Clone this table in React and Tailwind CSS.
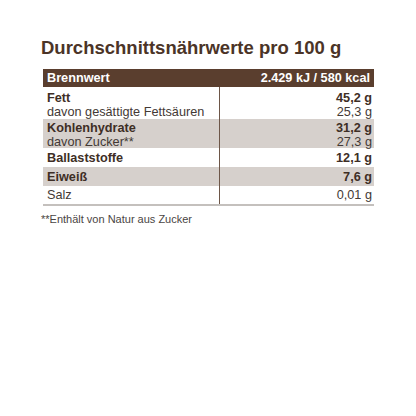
export default function App() {
  const font = { fontFamily: '"Liberation Sans", Arial, sans-serif' };

  return (
    <div className="w-[416px] h-[416px] bg-white" style={font}>
      <div className="pl-[40px] pr-[42px] pt-[37px]">
        <h1 className="text-[18.5px] leading-[22px] font-bold text-[#4b3427] pl-[1px]">
          Durchschnittsnährwerte pro 100 g
        </h1>

        <div className="mt-[10px] ml-[3px] text-[12.7px] leading-[14px] text-[#433935]">
          {/* Brennwert header */}
          <div className="flex justify-between items-center h-[18px] bg-[#5a3e2e] text-white font-bold px-[4px]">
            <span>Brennwert</span>
            <span>2.429 kJ / 580 kcal</span>
          </div>

          <div className="border-b-2 border-[#c4c0bd]">
            {/* Fett */}
            <div className="grid grid-cols-[177px_1fr] h-[32px]">
              <div className="pl-[4px] pt-[4px] border-r border-[#6d5648]">
                <div className="font-bold text-[#3e2e25]">Fett</div>
                <div>davon gesättigte Fettsäuren</div>
              </div>
              <div className="pr-[2px] pt-[4px] text-right">
                <div className="font-bold text-[#3e2e25]">45,2 g</div>
                <div>25,3 g</div>
              </div>
            </div>

            {/* Kohlenhydrate */}
            <div className="grid grid-cols-[177px_1fr] h-[29px] bg-[#d6d0cc]">
              <div className="pl-[4px] pt-[2px] border-r border-[#6d5648]">
                <div className="font-bold text-[#3e2e25]">Kohlenhydrate</div>
                <div>davon Zucker**</div>
              </div>
              <div className="pr-[2px] pt-[2px] text-right">
                <div className="font-bold text-[#3e2e25]">31,2 g</div>
                <div>27,3 g</div>
              </div>
            </div>

            {/* Ballaststoffe */}
            <div className="grid grid-cols-[177px_1fr] h-[19px]">
              <div className="pl-[4px] flex items-center border-r border-[#6d5648] font-bold text-[#3e2e25]">
                Ballaststoffe
              </div>
              <div className="pr-[2px] flex items-center justify-end font-bold text-[#3e2e25]">12,1 g</div>
            </div>

            {/* Eiweiß */}
            <div className="grid grid-cols-[177px_1fr] h-[19px] bg-[#d6d0cc]">
              <div className="pl-[4px] flex items-center border-r border-[#6d5648] font-bold text-[#3e2e25]">
                Eiweiß
              </div>
              <div className="pr-[2px] flex items-center justify-end font-bold text-[#3e2e25]">7,6 g</div>
            </div>

            {/* Salz */}
            <div className="grid grid-cols-[177px_1fr] h-[18px]">
              <div className="pl-[4px] flex items-center border-r border-[#6d5648]">Salz</div>
              <div className="pr-[2px] flex items-center justify-end">0,01 g</div>
            </div>
          </div>
        </div>

        <p className="mt-[7px] ml-[1px] text-[11px] leading-[13px] text-[#4a4543]">
          **Enthält von Natur aus Zucker
        </p>
      </div>
    </div>
  );
}
